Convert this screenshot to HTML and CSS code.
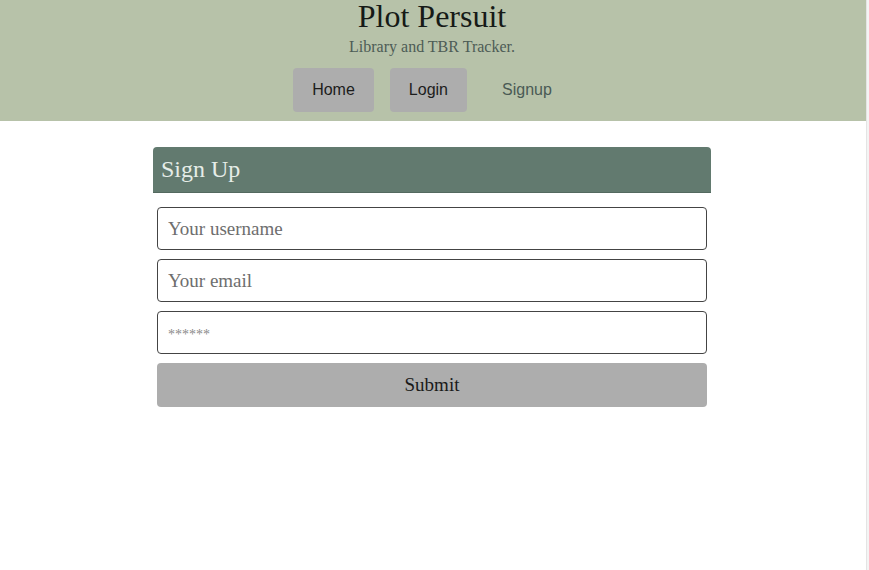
FILE: index.html
```html
<!DOCTYPE html>
<html lang="en">
<head>
<meta charset="utf-8">
<title>Plot Persuit - Sign Up</title>
<link rel="stylesheet" href="styles.css">
</head>
<body>
<div class="page">
  <header class="site-header">
    <h1 class="title">Plot Persuit</h1>
    <p class="tagline">Library and TBR Tracker.</p>
    <nav class="nav">
      <a class="nav-btn" href="#">Home</a>
      <a class="nav-btn" href="#">Login</a>
      <a class="nav-btn nav-btn--plain" href="#">Signup</a>
    </nav>
  </header>
  <main class="main">
    <section class="card">
      <h2 class="card-header">Sign Up</h2>
      <form class="card-body">
        <input class="field" type="text" placeholder="Your username">
        <input class="field" type="email" placeholder="Your email">
        <input class="field field--pw" type="password" placeholder="******">
        <button class="submit" type="button">Submit</button>
      </form>
    </section>
  </main>
</div>
</body>
</html>
```

FILE: styles.css
```css
html, body {
  margin: 0;
  padding: 0;
  background: #ffffff;
}
body {
  font-family: "Liberation Serif", "Times New Roman", serif;
  overflow: hidden;
}
.page {
  width: 866px;
  min-height: 570px;
  border-right: 1px solid #e4e4e4;
  box-shadow: 2px 0 0 #f4f4f4;
}
.site-header {
  background: #b7c2a9;
  display: flex;
  flex-direction: column;
  align-items: center;
  padding: 1px 2px 9px 0;
}
.title {
  margin: 0;
  font-size: 32px;
  line-height: 30px;
  font-weight: 400;
  color: #161a17;
}
.tagline {
  margin: 6px 0 0;
  font-size: 16px;
  line-height: 20px;
  color: #4d5c56;
}
.nav {
  display: flex;
  gap: 16px;
  margin-top: 11px;
}
.nav-btn {
  display: flex;
  align-items: center;
  height: 44px;
  padding: 0 19px;
  background: #adadad;
  border-radius: 4px;
  font-family: "Liberation Sans", Arial, sans-serif;
  font-size: 16px;
  color: #1c1c1c;
  text-decoration: none;
}
.nav-btn--plain {
  background: transparent;
  color: #4a5a55;
}
.main {
  display: flex;
  justify-content: center;
  padding: 26px 2px 0 0;
}
.card {
  width: 558px;
}
.card-header {
  margin: 0;
  height: 46px;
  box-sizing: border-box;
  background: #627a6f;
  border-bottom: 1px solid #53695f;
  border-radius: 4px 4px 0 0;
  padding: 0 8px;
  display: flex;
  align-items: center;
  font-size: 24px;
  font-weight: 400;
  color: #e6ede8;
}
.card-body {
  display: flex;
  flex-direction: column;
  gap: 9px;
  padding: 14px 4px 0;
  margin: 0;
}
.field {
  height: 43px;
  box-sizing: border-box;
  border: 1px solid #444444;
  border-radius: 4px;
  padding: 0 10px;
  font-family: "Liberation Serif", "Times New Roman", serif;
  font-size: 19px;
  color: #222;
  background: #fff;
  margin: 0;
}
.field::placeholder {
  color: #6e6e6e;
}
.field--pw::placeholder {
  font-size: 14px;
  color: #8a8a8a;
}
.submit {
  height: 44px;
  border: none;
  border-radius: 4px;
  background: #adadad;
  font-family: "Liberation Serif", "Times New Roman", serif;
  font-size: 19px;
  color: #1a1a1a;
  margin: 0;
}
```
